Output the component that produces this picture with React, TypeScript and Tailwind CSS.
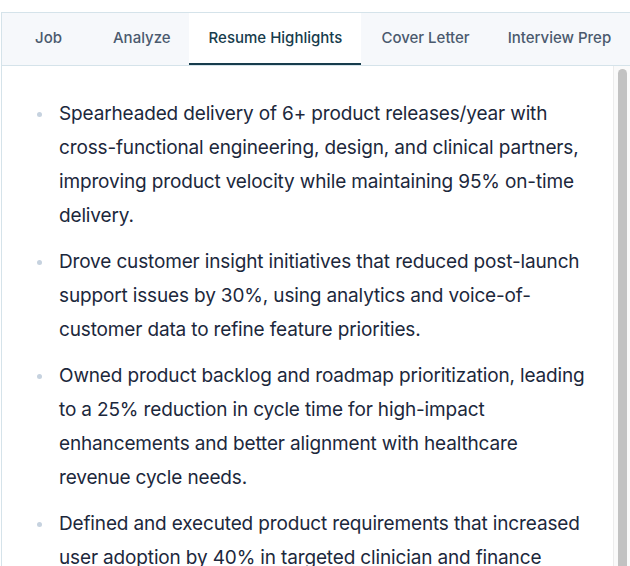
import React from "react";

const tabs = [
  { label: "Job", pad: "pl-5 pr-[31px]" },
  { label: "Analyze", pad: "pl-5 pr-[18px]" },
  { label: "Resume Highlights", pad: "pl-5 pr-[19px]" },
  { label: "Cover Letter", pad: "pl-5 pr-[18px]" },
  { label: "Interview Prep", pad: "px-5" },
];

const highlights = [
  "Spearheaded delivery of 6+ product releases/year with cross-functional engineering, design, and clinical partners, improving product velocity while maintaining 95% on-time delivery.",
  "Drove customer insight initiatives that reduced post-launch support issues by 30%, using analytics and voice-of-customer data to refine feature priorities.",
  "Owned product backlog and roadmap prioritization, leading to a 25% reduction in cycle time for high-impact enhancements and better alignment with healthcare revenue cycle needs.",
  "Defined and executed product requirements that increased user adoption by 40% in targeted clinician and finance workflows.",
];

export default function App() {
  const active = "Resume Highlights";
  return (
    <div className="h-[566px] w-[630px] overflow-hidden bg-white pt-3 font-['Inter',sans-serif]">
      <div className="ml-[1px] flex h-full flex-col border-l border-t border-[#d5e3ea]">
        {/* tab bar */}
        <div className="flex h-[53px] shrink-0 border-b border-[#d5e3ea] bg-[#f6f8fb] pl-[13px]">
          {tabs.map((t) => (
            <div
              key={t.label}
              className={
                t.label === active
                  ? `flex items-center whitespace-nowrap border-b-2 border-[#173c4c] bg-white pt-[1px] text-[15px] font-medium text-[#173c4c] ${t.pad}`
                  : `flex items-center whitespace-nowrap border-b-2 border-transparent pt-[1px] text-[15px] font-medium text-[#4b5a6e] ${t.pad}`
              }
            >
              {t.label}
            </div>
          ))}
        </div>

        {/* content + scrollbar */}
        <div className="flex min-h-0 flex-1">
          <div className="flex-1 overflow-hidden pl-[35px] pr-5 pt-[31px]">
            <ul className="flex flex-col gap-3">
              {highlights.map((h, i) => (
                <li
                  key={i}
                  className="flex gap-[17px] text-[19px] leading-[34px] tracking-[-0.15px] text-[#1c283c]"
                >
                  <span className="mt-[15px] h-[5px] w-[5px] shrink-0 rounded-full bg-[#c6d2df]" />
                  <span>{h}</span>
                </li>
              ))}
            </ul>
          </div>
          <div className="flex w-[17px] shrink-0 justify-center border-l border-[#ececec] bg-[#fafafa] pt-[3px]">
            <div className="h-[600px] w-[9px] rounded-full bg-[#c2c2c2]" />
          </div>
        </div>
      </div>
    </div>
  );
}
